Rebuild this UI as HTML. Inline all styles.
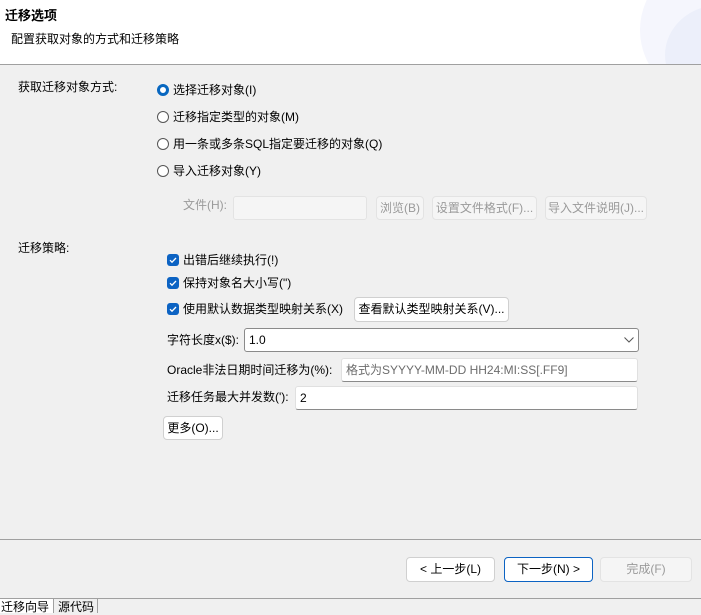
<!DOCTYPE html>
<html><head><meta charset="utf-8"><style>
*{box-sizing:border-box;margin:0;padding:0}
body{width:701px;height:613px;overflow:hidden;background:#f0f0f0;position:relative;font-family:"Liberation Sans","Noto Sans CJK SC",sans-serif;font-size:12px;color:#000}
.a{position:absolute;white-space:nowrap;line-height:16px}
.hdr{position:absolute;left:0;top:0;width:701px;height:65px;background:#fff;border-bottom:1px solid #a0a0a0;overflow:hidden}
.btn{position:absolute;background:#fdfdfd;border:1px solid #d0d0d0;border-radius:4px;text-align:center;line-height:22px;white-space:nowrap}
.dis{color:#9a9a9a;background:#f5f5f5;border-color:#e3e3e3}
.in{position:absolute;background:#fff;border:1px solid #e0e0e0;border-bottom:1px solid #8a8a8a;border-radius:3px;padding-left:4px;line-height:23px}
.rad{position:absolute;width:12px;height:12px;border:1px solid #555;border-radius:50%;background:#fff}
.rad.on{border:3.5px solid #0867c0;background:#fff}
.cb{position:absolute;width:12px;height:12px;border-radius:3px;background:#0c63c3}
.cb svg{position:absolute;left:0;top:0}
</style></head><body>
<div class="hdr">
<div style="position:absolute;left:640px;top:-40px;width:140px;height:140px;border-radius:50%;background:#f5f6fd"></div>
<div style="position:absolute;left:665px;top:5px;width:110px;height:100px;border-radius:50%;background:#eceffa"></div>
<div class="a" style="left:5px;top:8px;font-weight:bold;font-size:13px">迁移选项</div>
<div class="a" style="left:11px;top:31px">配置获取对象的方式和迁移策略</div>
</div>

<div class="a" style="left:18px;top:79px">获取迁移对象方式:</div>
<div class="rad on" style="left:157px;top:84px"></div><div class="a" style="left:173px;top:82px">选择迁移对象(I)</div>
<div class="rad" style="left:157px;top:111px"></div><div class="a" style="left:173px;top:109px">迁移指定类型的对象(M)</div>
<div class="rad" style="left:157px;top:138px"></div><div class="a" style="left:173px;top:136px">用一条或多条SQL指定要迁移的对象(Q)</div>
<div class="rad" style="left:157px;top:165px"></div><div class="a" style="left:173px;top:163px">导入迁移对象(Y)</div>

<div class="a" style="left:183px;top:197px;color:#9a9a9a">文件(H):</div>
<div class="in" style="left:233px;top:196px;width:134px;height:24px;background:#f5f5f5;border-color:#e3e3e3"></div>
<div class="btn dis" style="left:376px;top:196px;width:48px;height:24px">浏览(B)</div>
<div class="btn dis" style="left:432px;top:196px;width:105px;height:24px">设置文件格式(F)...</div>
<div class="btn dis" style="left:545px;top:196px;width:102px;height:24px">导入文件说明(J)...</div>

<div class="a" style="left:18px;top:240px">迁移策略:</div>
<div class="cb" style="left:167px;top:254px"><svg width="12" height="12"><path d="M3 6.2l2 2 4-4.2" stroke="#fff" stroke-width="1.3" fill="none"/></svg></div><div class="a" style="left:183px;top:252px">出错后继续执行(!)</div>
<div class="cb" style="left:167px;top:277px"><svg width="12" height="12"><path d="M3 6.2l2 2 4-4.2" stroke="#fff" stroke-width="1.3" fill="none"/></svg></div><div class="a" style="left:183px;top:275px">保持对象名大小写(")</div>
<div class="cb" style="left:167px;top:303px"><svg width="12" height="12"><path d="M3 6.2l2 2 4-4.2" stroke="#fff" stroke-width="1.3" fill="none"/></svg></div><div class="a" style="left:183px;top:301px">使用默认数据类型映射关系(X)</div>
<div class="btn" style="left:354px;top:297px;width:155px;height:25px;background:#fff">查看默认类型映射关系(V)...</div>

<div class="a" style="left:167px;top:332px">字符长度x($):</div>
<div class="in" style="left:244px;top:328px;width:395px;height:24px;border:1px solid #8a8a8a;line-height:22px">1.0<svg style="position:absolute;right:4px;top:8px" width="10" height="6"><path d="M0.5 0.5l4.5 4.5 4.5-4.5" stroke="#555" fill="none"/></svg></div>

<div class="a" style="left:167px;top:362px">Oracle非法日期时间迁移为(%):</div>
<div class="in" style="left:341px;top:358px;width:297px;height:24px;color:#6d6d6d">格式为SYYYY-MM-DD HH24:MI:SS[.FF9]</div>

<div class="a" style="left:167px;top:389px">迁移任务最大并发数('):</div>
<div class="in" style="left:295px;top:386px;width:343px;height:24px">2</div>

<div class="btn" style="left:163px;top:416px;width:60px;height:24px;background:#fff">更多(O)...</div>

<div style="position:absolute;left:0;top:539px;width:701px;height:1px;background:#a0a0a0"></div>
<div class="btn" style="left:406px;top:557px;width:89px;height:25px;background:#fff">&lt; 上一步(L)</div>
<div class="btn" style="left:504px;top:557px;width:89px;height:25px;background:#fff;border-color:#0c63c3">下一步(N) &gt;</div>
<div class="btn dis" style="left:600px;top:557px;width:92px;height:25px">完成(F)</div>

<div style="position:absolute;left:0;top:598px;width:701px;height:1px;background:#a0a0a0"></div>
<div style="position:absolute;left:0;top:599px;width:53px;height:14px;background:#fff"></div>
<div style="position:absolute;left:53px;top:599px;width:1px;height:14px;background:#a0a0a0"></div>
<div style="position:absolute;left:97px;top:599px;width:1px;height:14px;background:#a0a0a0"></div>
<div class="a" style="left:1px;top:599px">迁移向导</div>
<div class="a" style="left:58px;top:599px">源代码</div>
</body></html>
